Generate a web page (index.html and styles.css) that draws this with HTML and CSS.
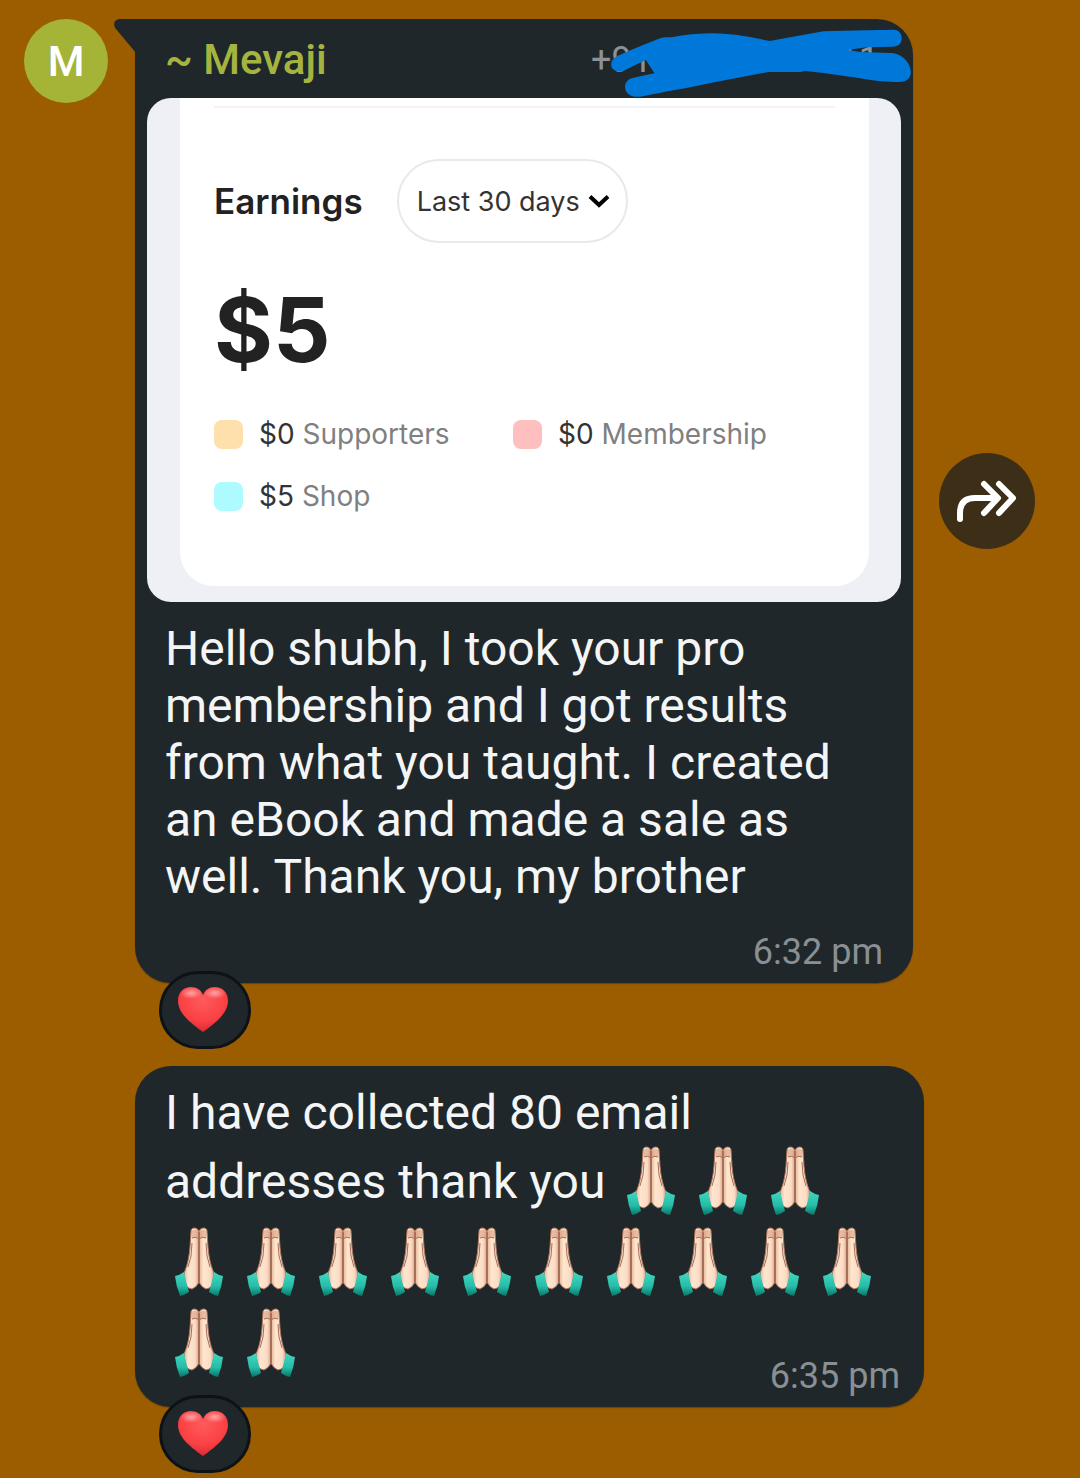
FILE: index.html
```html
<!DOCTYPE html>
<html lang="en">
<head>
<meta charset="utf-8">
<meta name="viewport" content="width=device-width, initial-scale=1">
<title>Group chat</title>
<link rel="stylesheet" href="styles.css">
</head>
<body>
<svg class="sprite" aria-hidden="true">
  <defs>
    <linearGradient id="skin" x1="0" x2="1" y1="0" y2="0">
      <stop offset="0" stop-color="#e3b494"/>
      <stop offset=".3" stop-color="#ffe5cf"/>
      <stop offset=".75" stop-color="#fbdcc5"/>
      <stop offset="1" stop-color="#d79f83"/>
    </linearGradient>
    <linearGradient id="cuff" x1="0" x2="0" y1="0" y2="1">
      <stop offset="0" stop-color="#43d6c0"/>
      <stop offset=".6" stop-color="#25bda8"/>
      <stop offset="1" stop-color="#087567"/>
    </linearGradient>
    <radialGradient id="heartFill" cx=".5" cy=".3" r=".7">
      <stop offset="0" stop-color="#ff5a5b"/>
      <stop offset=".65" stop-color="#fa4144"/>
      <stop offset="1" stop-color="#d92a31"/>
    </radialGradient>
    <radialGradient id="shine">
      <stop offset="0" stop-color="#fff" stop-opacity=".5"/>
      <stop offset="1" stop-color="#fff" stop-opacity="0"/>
    </radialGradient>
    <symbol id="pray" viewBox="2 -1 72 81">
      <path d="M36 8C34 4 28 4 28 8L27 24C26 36 24 43 21 50L22 62Q26 66 29 66Q34 64 36 59Z" fill="url(#skin)" stroke="#a8725a" stroke-width="1"/>
      <path d="M36 8C38 4 44 4 44 8L45 24C46 36 48 43 51 50L50 62Q46 66 43 66Q38 64 36 59Z" fill="url(#skin)" stroke="#a8725a" stroke-width="1"/>
      <path d="M28.500 8Q32 5 36 9Q40 5 43.500 8V15H28.500Z" fill="#d79a7e" opacity=".55"/>
      <path d="M36 9V59" fill="none" stroke="#a8705a" stroke-width="2"/>
      <path d="M29 15Q33 13 36 16Q39 13 43 15M29 20Q29 34 25 44M43 20Q43 34 47 44" fill="none" stroke="#a8705a" stroke-width="1"/>
      <path d="M12 53Q17 52 21 49Q23 59 26 69Q22 72 17 73Q13 63 12 53Z" fill="url(#cuff)"/>
      <path d="M60 53Q55 52 51 49Q49 59 46 69Q50 72 55 73Q59 63 60 53Z" fill="url(#cuff)"/>
    </symbol>
    <symbol id="heart" viewBox="0 0 54 49">
      <path d="M25 46C14 38 0 28 0 15C0 6 6 1 13 1C19 1 23 4 25 9C27 4 31 1 37 1C44 1 50 6 50 15C50 28 36 38 25 46Z" fill="url(#heartFill)"/>
      <ellipse cx="13" cy="7" rx="11" ry="6" fill="url(#shine)"/>
      <ellipse cx="37" cy="7" rx="11" ry="6" fill="url(#shine)"/>
    </symbol>
  </defs>
</svg>

<main class="chat">
  <article class="message">
    <div class="avatar" aria-hidden="true">M</div>
    <div class="content">
      <div class="bubble bubble--first">
        <svg class="tail" viewBox="0 0 22 34" aria-hidden="true"><path d="M22 0H6C1 0-2 5 2 10L22 34Z"/></svg>
        <header class="sender">
          <span class="name">~ Mevaji</span>
          <span class="phone"><span>+91</span><span>11</span></span>
          <svg class="scribble" viewBox="150 55 905 210" aria-hidden="true"><path d="M153 165C153 145 175 138 190 131C230 113 270 98 300 86Q310 81 335 83Q380 73 450 71Q520 70 628 94L790 65Q850 64 920 62L1000 60C1032 60 1034 111 1000 111L920 113L862 121L900 127L990 130C1025 130 1052 160 1052 188C1052 205 1040 216 1025 216C985 219 935 213 900 206L790 190L735 184L720 187L625 187L470 216L375 236L330 243L240 261C185 267 182 210 220 204Q250 198 283 191L257 151L190 183C175 190 153 182 153 165Z"/></svg>
        </header>
        <section class="photo" aria-label="Earnings">
          <div class="card">
            <div class="card-head">
              <h2 class="card-title">Earnings</h2>
              <div class="period">
                <select class="period-select" aria-label="Period"><option>Last 30 days</option></select>
                <svg class="chevron" viewBox="0 0 22 14" aria-hidden="true"><path d="M2 2.500L11 11L20 2.500"/></svg>
              </div>
            </div>
            <p class="total">$5</p>
            <ul class="legend">
              <li><span class="swatch swatch--supporters"></span><span><b>$0</b> Supporters</span></li>
              <li><span class="swatch swatch--membership"></span><span><b>$0</b> Membership</span></li>
              <li><span class="swatch swatch--shop"></span><span><b>$5</b> Shop</span></li>
            </ul>
          </div>
        </section>
        <p class="text">Hello shubh, I took your pro membership and I got results from what you taught. I created an eBook and made a sale as well. Thank you, my brother</p>
        <time class="time">6:32 pm</time>
      </div>
      <button class="forward" type="button" aria-label="Forward">
        <svg viewBox="0 0 96 96" aria-hidden="true"><path d="M21 66V60Q21 45 36 45H58M45 31L59 45L45 60M60 31L74 45L60 60"/></svg>
      </button>
    </div>
    <button class="reaction" type="button" aria-label="Heart reaction"><svg><use href="#heart"/></svg></button>
  </article>

  <article class="message message--next">
    <div class="bubble">
      <p class="text">I have collected 80 email addresses thank you <svg class="emoji" role="img" aria-label="Folded hands"><use href="#pray"/></svg><svg class="emoji"><use href="#pray"/></svg><svg class="emoji"><use href="#pray"/></svg><svg class="emoji"><use href="#pray"/></svg><svg class="emoji"><use href="#pray"/></svg><svg class="emoji"><use href="#pray"/></svg><svg class="emoji"><use href="#pray"/></svg><svg class="emoji"><use href="#pray"/></svg><svg class="emoji"><use href="#pray"/></svg><svg class="emoji"><use href="#pray"/></svg><svg class="emoji"><use href="#pray"/></svg><svg class="emoji"><use href="#pray"/></svg><svg class="emoji"><use href="#pray"/></svg><svg class="emoji"><use href="#pray"/></svg><svg class="emoji"><use href="#pray"/></svg></p>
      <time class="time time--inline">6:35 pm</time>
    </div>
    <button class="reaction" type="button" aria-label="Heart reaction"><svg><use href="#heart"/></svg></button>
  </article>
</main>
</body>
</html>
```

FILE: styles.css
```css
* {
  box-sizing: border-box;
}

body {
  margin: 0;
  background: #9b5d00;
  font-family: Roboto, sans-serif;
}

h2, p, ul {
  margin: 0;
  padding: 0;
}

button {
  padding: 0;
  border: 0;
  font: inherit;
}

.sprite {
  position: absolute;
  width: 0;
  height: 0;
}

.chat {
  display: flex;
  flex-direction: column;
  gap: 17px;
  padding: 19px 45px 5px 24px;
}

.message {
  display: grid;
  grid-template-columns: 84px 1fr;
  column-gap: 27px;
}

.message--next .bubble {
  grid-column: 2;
  margin-right: 111px;
}

.avatar {
  display: grid;
  place-items: center;
  width: 84px;
  height: 84px;
  border-radius: 50%;
  background: #a5b337;
  color: #fff;
  font-size: 42px;
  font-weight: 500;
}

.content {
  display: flex;
  align-items: center;
  gap: 26px;
  min-width: 0;
}

.bubble {
  position: relative;
  flex: 1;
  min-width: 0;
  display: flex;
  flex-direction: column;
  padding-bottom: 10px;
  border-radius: 36px;
  background: #20272a;
  box-shadow: 0 1px 1px #6b4207;
}

.bubble--first {
  border-top-left-radius: 0;
}

.tail {
  position: absolute;
  top: 0;
  left: -21px;
  width: 22px;
  height: 34px;
  fill: #20272a;
}

.sender {
  display: flex;
  justify-content: space-between;
  align-items: center;
  padding: 16px 34px 13px 30px;
  line-height: 50px;
}

.name {
  color: #a5b440;
  font-size: 42px;
  font-weight: 500;
}

.phone {
  display: flex;
  justify-content: space-between;
  width: 288px;
  color: #8c9295;
  font-size: 36px;
}

.scribble {
  position: absolute;
  top: 9px;
  right: 1px;
  width: 302px;
  height: 70px;
  fill: #0078d9;
}

.photo {
  margin: 0 12px;
  padding: 0 32px 16px 33px;
  border-radius: 24px;
  background: #eff0f5;
  color: #222;
  font-family: Inter, sans-serif;
}

.card {
  padding: 8px 34px 69px;
  border-radius: 0 0 34px 34px;
  background: #fff;
}

.card-head {
  display: flex;
  align-items: center;
  gap: 34px;
  padding-top: 51px;
  border-top: 2px solid #f3f3f4;
}

.card-title {
  font-size: 35px;
  font-weight: 600;
}

.period {
  position: relative;
}

.period-select {
  width: 231px;
  height: 84px;
  padding: 0 18px;
  border: 2px solid #e9e9e9;
  border-radius: 42px;
  appearance: none;
  background: #fff;
  color: #333;
  font-family: inherit;
  font-size: 27px;
}

.chevron {
  position: absolute;
  top: 35px;
  right: 18px;
  width: 22px;
  height: 14px;
  fill: none;
  stroke: #000;
  stroke-width: 4;
  pointer-events: none;
}

.total {
  margin-top: 39px;
  font-size: 90px;
  font-weight: 700;
  line-height: 96px;
}

.legend {
  display: grid;
  grid-template-columns: 299px 1fr;
  row-gap: 20px;
  margin-top: 35px;
  list-style: none;
  color: #808080;
  font-size: 28px;
  line-height: 42px;
}

.legend li {
  display: flex;
  align-items: center;
  gap: 16px;
  white-space: nowrap;
}

.legend b {
  color: #333;
  font-weight: 400;
}

.swatch {
  width: 29px;
  height: 29px;
  border-radius: 8px;
}

.swatch--supporters { background: #fee0ac; }
.swatch--membership { background: #febfbf; }
.swatch--shop { background: #aefbff; }

.text {
  padding: 18px 28px 0 30px;
  color: #f3f5f6;
  font-size: 48px;
  line-height: 57px;
}

.emoji {
  width: 72px;
  height: 81px;
  vertical-align: -24px;
}

.time {
  align-self: flex-end;
  margin-top: 26px;
  padding-right: 30px;
  color: #899093;
  font-size: 36px;
  line-height: 42px;
}

.time--inline {
  margin-top: -29px;
  padding-right: 24px;
}

.forward {
  flex: none;
  width: 96px;
  height: 96px;
  border-radius: 50%;
  background: #3d2e17;
}

.forward svg {
  display: block;
  fill: none;
  stroke: #fff;
  stroke-width: 6;
  stroke-linecap: round;
  stroke-linejoin: round;
}

.reaction {
  grid-column: 2;
  z-index: 1;
  display: grid;
  place-items: center;
  width: 92px;
  height: 78px;
  margin: -12px 0 0 24px;
  border: 3px solid #0c1215;
  border-radius: 39px;
  background: #20272a;
}

.reaction svg {
  width: 54px;
  height: 49px;
}
```
